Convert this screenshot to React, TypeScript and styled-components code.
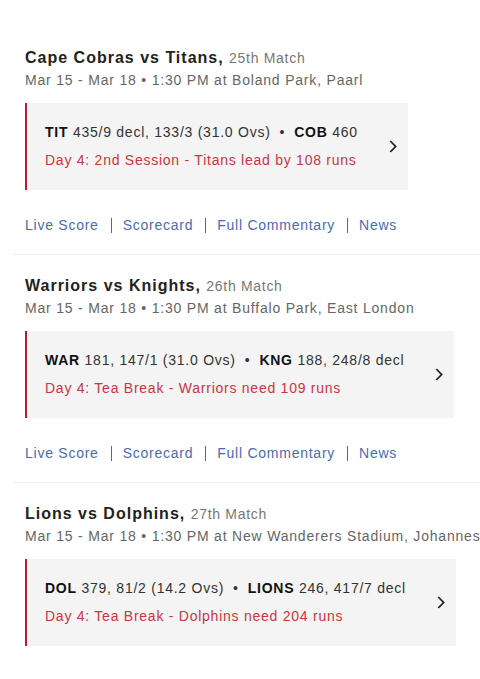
import React from "react";
import styled, { createGlobalStyle } from "styled-components";

const Global = createGlobalStyle`
  html, body { margin: 0; padding: 0; background: #fff; overflow: hidden; }
  body { font-family: "Liberation Sans", Arial, sans-serif; }
`;

const Page = styled.div`
  width: 480px;
  padding: 48px 0 0 13px;
  box-sizing: border-box;
  overflow: hidden;
`;

const Card = styled.section<{ last?: boolean }>`
  padding: 0 0 20px 12px;
  margin-bottom: 21px;
  border-bottom: ${(p) => (p.last ? "none" : "1px solid #ececec")};
  white-space: nowrap;
`;

const Title = styled.div`
  font-size: 16px;
  line-height: 20px;
  font-weight: bold;
  letter-spacing: 1px;
  color: #222;
`;

const MatchNo = styled.span`
  font-size: 14px;
  font-weight: normal;
  letter-spacing: 0.7px;
  color: #777;
`;

const Meta = styled.div`
  font-size: 14px;
  line-height: 18px;
  letter-spacing: 0.8px;
  color: #666;
  margin-top: 3px;
`;

const ScoreBox = styled.div`
  display: inline-flex;
  align-items: center;
  gap: 31px;
  margin-top: 14px;
  background: #f4f4f4;
  border-left: 2px solid #b3202a;
  padding: 20px 11px 21px 18px;
`;

const ScoreText = styled.div`
  display: flex;
  flex-direction: column;
  gap: 10px;
  font-size: 14px;
  line-height: 18px;
  letter-spacing: 0.75px;
`;

const ScoreLine = styled.div`
  color: #333;
`;

const Team = styled.b`
  color: #111;
`;

const Dot = styled.span`
  margin: 0 9px;
`;

const Status = styled.div`
  color: #cc3441;
`;

const Links = styled.nav`
  display: flex;
  align-items: center;
  margin-top: 26px;
  font-size: 14px;
  line-height: 18px;
  letter-spacing: 0.75px;
`;

const Link = styled.a`
  color: #4a6cb3;
  text-decoration: none;
`;

const Sep = styled.span`
  width: 1px;
  height: 15px;
  background: #666;
  margin: 0 11px 0 12px;
`;

const Chevron = () => (
  <svg width="8" height="13" viewBox="0 0 8 13">
    <polyline points="1.3,1 6.6,6.5 1.3,12" fill="none" stroke="#222" strokeWidth="1.8" />
  </svg>
);

type Match = {
  title: string;
  no: string;
  meta: string;
  a: string;
  aScore: string;
  b: string;
  bScore: string;
  status: string;
};

const matches: Match[] = [
  {
    title: "Cape Cobras vs Titans,",
    no: "25th Match",
    meta: "Mar 15 - Mar 18 \u2022 1:30 PM at Boland Park, Paarl",
    a: "TIT",
    aScore: "435/9 decl, 133/3 (31.0 Ovs)",
    b: "COB",
    bScore: "460",
    status: "Day 4: 2nd Session - Titans lead by 108 runs",
  },
  {
    title: "Warriors vs Knights,",
    no: "26th Match",
    meta: "Mar 15 - Mar 18 \u2022 1:30 PM at Buffalo Park, East London",
    a: "WAR",
    aScore: "181, 147/1 (31.0 Ovs)",
    b: "KNG",
    bScore: "188, 248/8 decl",
    status: "Day 4: Tea Break - Warriors need 109 runs",
  },
  {
    title: "Lions vs Dolphins,",
    no: "27th Match",
    meta: "Mar 15 - Mar 18 \u2022 1:30 PM at New Wanderers Stadium, Johannesburg",
    a: "DOL",
    aScore: "379, 81/2 (14.2 Ovs)",
    b: "LIONS",
    bScore: "246, 417/7 decl",
    status: "Day 4: Tea Break - Dolphins need 204 runs",
  },
];

export default function App() {
  return (
    <Page>
      <Global />
      {matches.map((m, i) => {
        const last = i === matches.length - 1;
        return (
          <Card key={m.no} last={last}>
            <Title>
              {m.title} <MatchNo>{m.no}</MatchNo>
            </Title>
            <Meta>{m.meta}</Meta>
            <ScoreBox>
              <ScoreText>
                <ScoreLine>
                  <Team>{m.a}</Team> {m.aScore}
                  <Dot>{"\u2022"}</Dot>
                  <Team>{m.b}</Team> {m.bScore}
                </ScoreLine>
                <Status>{m.status}</Status>
              </ScoreText>
              <Chevron />
            </ScoreBox>
            {!last && (
              <Links>
                <Link href="#">Live Score</Link>
                <Sep />
                <Link href="#">Scorecard</Link>
                <Sep />
                <Link href="#">Full Commentary</Link>
                <Sep />
                <Link href="#">News</Link>
              </Links>
            )}
          </Card>
        );
      })}
    </Page>
  );
}
